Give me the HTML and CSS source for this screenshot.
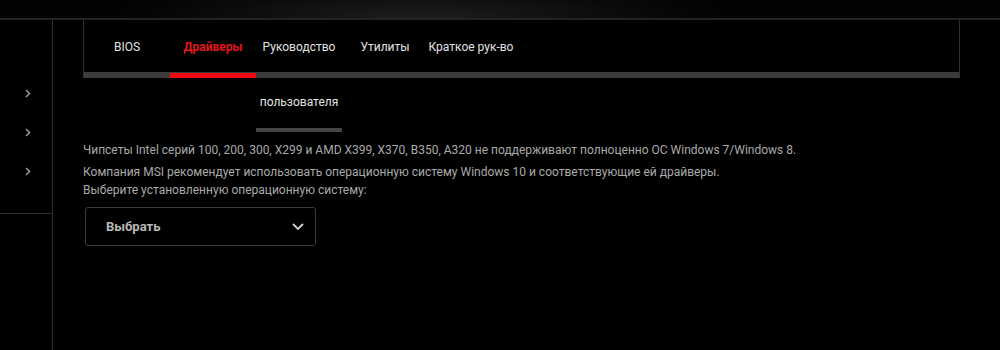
FILE: index.html
```html
<!DOCTYPE html>
<html lang="ru">
<head>
    <meta charset="UTF-8">
    <title>Поддержка - Драйверы</title>
    <link rel="stylesheet" href="styles.css">
</head>
<body>
    <div class="topbar"></div>

    <div class="page">
        <aside class="sidebar">
            <ul class="side-list">
                <li class="side-item">
                    <svg class="side-arrow" viewBox="0 0 6 9"><path d="M1 1l3.5 3.5L1 8"/></svg>
                </li>
                <li class="side-item">
                    <svg class="side-arrow" viewBox="0 0 6 9"><path d="M1 1l3.5 3.5L1 8"/></svg>
                </li>
                <li class="side-item">
                    <svg class="side-arrow" viewBox="0 0 6 9"><path d="M1 1l3.5 3.5L1 8"/></svg>
                </li>
            </ul>
        </aside>

        <main class="content">
            <div class="tabs-box">
                <ul class="tabs">
                    <li class="tab">BIOS</li>
                    <li class="tab active">Драйверы</li>
                    <li class="tab tab-long">Руководство пользователя</li>
                    <li class="tab">Утилиты</li>
                    <li class="tab">Краткое рук-во</li>
                </ul>
            </div>

            <div class="notice">
                <p class="note first">Чипсеты Intel серий 100, 200, 300, X299 и AMD X399, X370, B350, A320 не поддерживают полноценно ОС Windows 7/Windows 8.</p>
                <p class="note">Компания MSI рекомендует использовать операционную систему Windows 10 и соответствующие ей драйверы.</p>
                <p class="note">Выберите установленную операционную систему:</p>
            </div>

            <button class="os-select">
                <span class="os-label">Выбрать</span>
                <svg class="os-arrow" viewBox="0 0 12 7">
                    <path d="M1 1l5 5 5-5"/>
                </svg>
            </button>
        </main>
    </div>
</body>
</html>
```

FILE: styles.css
```css
body {
    margin: 0;
    background: #000;
    font-family: Roboto, "Liberation Sans", sans-serif;
    font-size: 12px;
    color: #ddd;
    min-height: 350px;
}

ul {
    list-style: none;
    margin: 0;
    padding: 0;
}

.topbar {
    height: 18px;
    background: radial-gradient(ellipse 300px 40px at 42% 100%, #1d1d1f 0%, #0d0d0e 60%, #030303 100%);
    border-bottom: 2px solid #232323;
}

.page {
    display: flex;
    min-height: 330px;
}

/* Sidebar */
.sidebar {
    width: 52px;
    border-right: 1px solid #2f2f2f;
}

.side-list {
    padding: 54px 0 22px;
    border-bottom: 1px solid #2f2f2f;
}

.side-item {
    height: 39px;
    display: flex;
    align-items: center;
    justify-content: center;
    padding-left: 4px;
}

.side-arrow {
    width: 6px;
    height: 9px;
    fill: none;
    stroke: #9a9a9a;
    stroke-width: 1.5;
}

/* Content */
.content {
    padding-left: 30px;
}

.tabs-box {
    width: 875px;
    height: 52px;
    border-left: 1px solid #2f2f2f;
    border-right: 1px solid #2f2f2f;
    border-bottom: 6px solid #3b3b3b;
}

.tabs {
    display: flex;
    align-items: flex-start;
    height: 52px;
}

.tab {
    position: relative;
    width: 86px;
    flex: none;
    text-align: center;
    line-height: 55px;
    white-space: nowrap;
    color: #e2e2e2;
}

.tab.active {
    color: #e3161b;
    font-weight: bold;
}

.tab.active::after {
    content: "";
    position: absolute;
    left: 0;
    right: 0;
    top: 53px;
    height: 5px;
    background: #ee0a0a;
}

.tab-long {
    white-space: normal;
}

.tab-long::after {
    content: "";
    position: absolute;
    left: 0;
    right: 0;
    bottom: -2px;
    height: 4px;
    background: #444;
}

.notice {
    margin-top: 63px;
    color: #a9a9a9;
}

.note {
    margin: 0;
    line-height: 18px;
}

.note.first {
    margin-bottom: 4px;
}

.os-select {
    margin-top: 8px;
    margin-left: 2px;
    width: 231px;
    height: 39px;
    display: flex;
    align-items: center;
    justify-content: space-between;
    padding: 0 11px 0 20px;
    background: #000;
    border: 1px solid #3a3a3a;
    border-radius: 3px;
    font-family: inherit;
    font-size: 13px;
    font-weight: bold;
    color: #b8b8b8;
    cursor: pointer;
}

.os-arrow {
    width: 12px;
    height: 7px;
    fill: none;
    stroke: #cfcfcf;
    stroke-width: 1.8;
}
```
